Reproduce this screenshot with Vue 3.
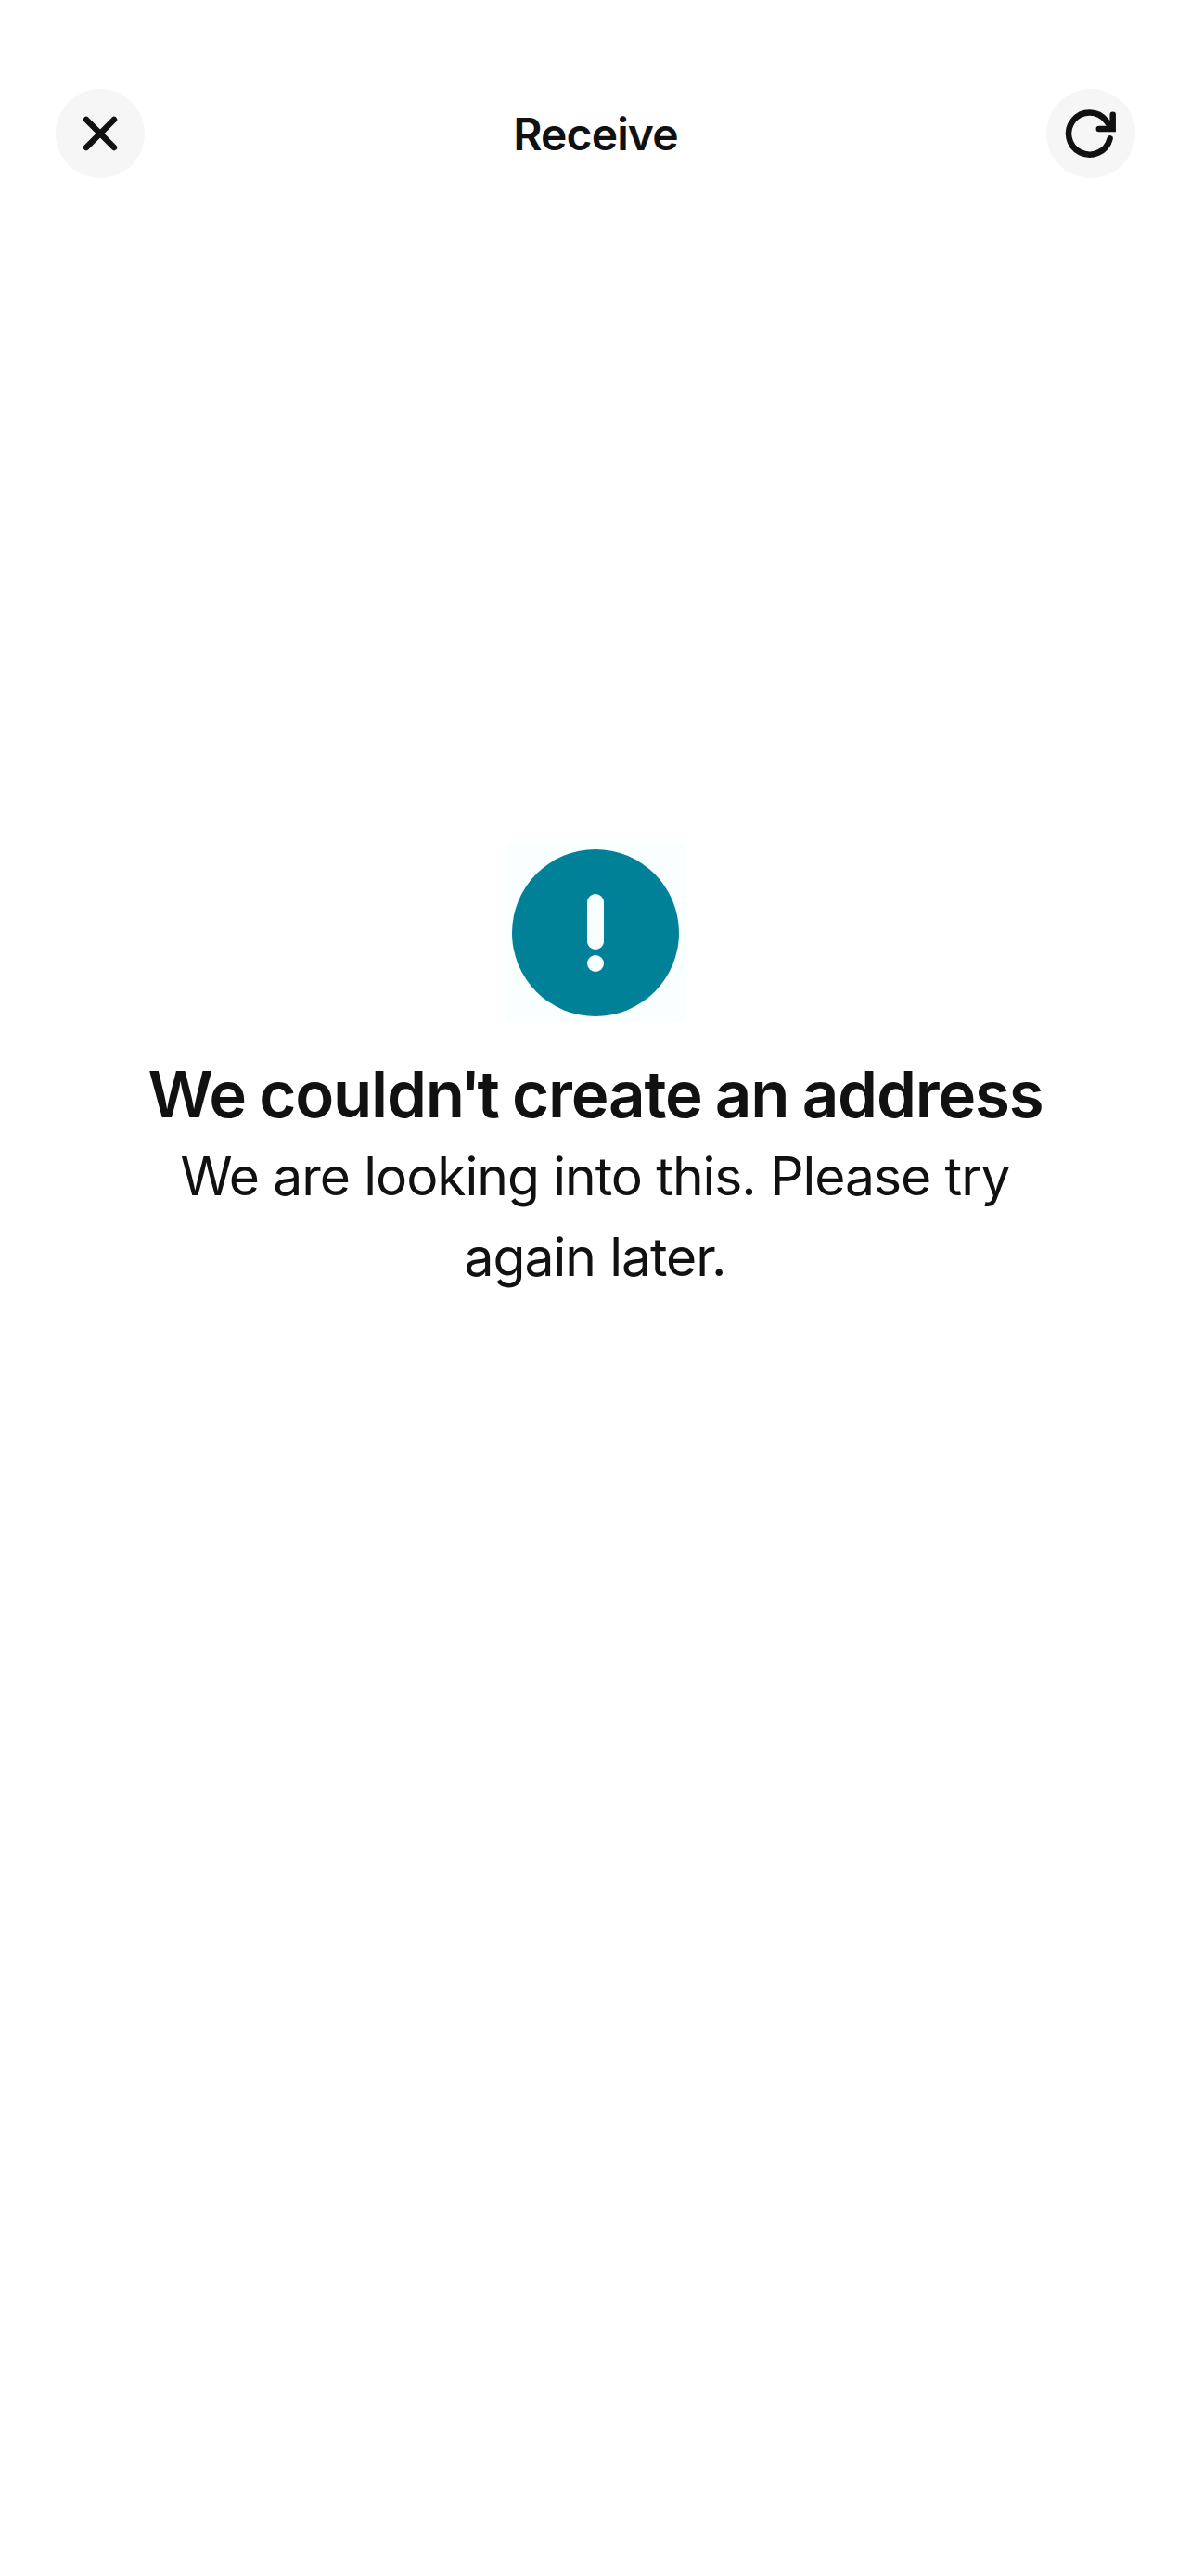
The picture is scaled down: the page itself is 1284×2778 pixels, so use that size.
<script setup>
</script>

<template>
  <main class="screen">
    <header class="bar">
      <button class="round" aria-label="Close">
        <svg width="96" height="96" viewBox="0 0 96 96" fill="none" stroke="#111" stroke-width="6.5" stroke-linecap="round"><path d="M33 33 63 63M63 33 33 63" /></svg>
      </button>
      <h1>Receive</h1>
      <button class="round" aria-label="Refresh">
        <svg width="96" height="96" viewBox="0 0 96 96" fill="none" stroke="#111" stroke-width="6.5" stroke-linecap="round" stroke-linejoin="miter"><path d="M71.7 27.8V43H56.8M68.6 53.4A22.6 22.6 0 1 1 64.5 34.2L70.5 42" /></svg>
      </button>
    </header>
    <section class="message">
      <div class="art">
        <svg width="192" height="192" viewBox="0 0 192 192"><circle cx="96" cy="96" r="90" fill="#008198" /><rect x="87" y="54" width="18" height="60" rx="9" fill="#f9feff" /><circle cx="96" cy="129" r="9" fill="#f9feff" /></svg>
      </div>
      <h2>We could<span class="tight">n'</span>t create an address</h2>
      <p>We are looking into this. Please try<br />again later.</p>
    </section>
  </main>
</template>

<style>
body { margin: 0; background: #fff; }
</style>

<style scoped>
.screen { height: 2778px; background: #fff; color: #111; font-family: Inter, sans-serif; overflow: hidden; }
.bar { display: flex; align-items: center; justify-content: space-between; padding: 96px 60px 0; }
.round { width: 96px; height: 96px; padding: 0; border: 0; border-radius: 50%; background: #f6f6f6; }
svg { display: block; }
h1, h2, p { margin: 0; text-align: center; white-space: nowrap; }
h1 { padding-top: 2px; font-size: 48px; line-height: 60px; font-weight: 640; letter-spacing: -0.9px; }
.message { display: flex; flex-direction: column; align-items: center; padding-top: 718px; }
.art { background: #f9feff; }
h2 { margin-top: 33px; font-size: 69px; line-height: 90px; font-weight: 640; letter-spacing: -1.2px; word-spacing: -1.8px; }
.tight { letter-spacing: -4px; }
p { font-size: 57px; line-height: 87px; letter-spacing: -1.04px; word-spacing: 0.4px; margin-left: -1px; }
</style>
